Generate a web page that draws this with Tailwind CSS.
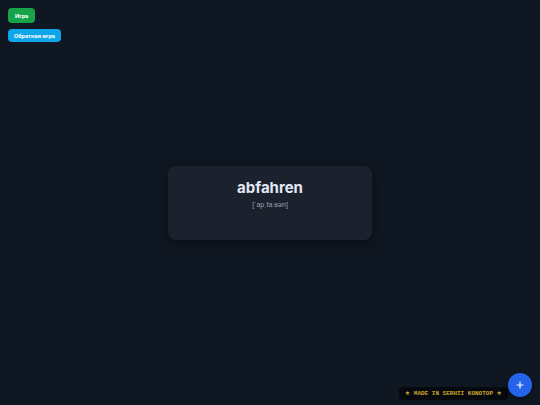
<!DOCTYPE html>
<html lang="ru">
<head>
  <meta charset="UTF-8">
  <meta name="viewport" content="width=device-width, initial-scale=1.0">
  <title>abfahren</title>
  <script src="https://cdn.jsdelivr.net/npm/@tailwindcss/browser@4"></script>
</head>
<body class="min-h-screen bg-[#0f1722] font-['Inter','Noto_Sans',sans-serif] text-[#e2e8f8]">
  <main class="min-h-screen flex items-center justify-center p-4">
    <article class="w-2/5 min-h-[74px] rounded-lg bg-[#1b212d] pt-3 pb-8 text-center shadow-[0_4px_14px_rgba(0,0,0,0.4)]">
      <h1 class="text-[15px] leading-5 font-bold">abfahren</h1>
      <p class="mt-1 text-[7px] leading-[6px] text-gray-400 font-['Liberation_Sans',sans-serif]">[ˈapˌfaːʁən]</p>
    </article>
  </main>

  <nav class="fixed top-2 left-2 flex flex-col items-start gap-[6px] text-[6px] leading-[7px] font-bold text-white font-['Roboto','Liberation_Sans',sans-serif]">
    <button type="button" class="rounded-[4px] bg-[#16a34a] px-[7px] py-1">Игра</button>
    <button type="button" class="rounded-[4px] bg-[#0ea5e9] px-[6px] py-[3px]">Обратная игра</button>
  </nav>

  <footer class="fixed right-8 bottom-[5px] rounded-[4px] bg-[#06090e] px-[6px] py-[3px] text-[6px] leading-[7px] font-bold whitespace-nowrap text-[#c9a52c] font-['Liberation_Mono','DejaVu_Sans',monospace]">★ MADE IN SERHII KONOTOP ★</footer>

  <button type="button" aria-label="Добавить" class="fixed right-2 bottom-2 size-6 flex items-center justify-center rounded-full bg-[#2563eb] text-white shadow-[0_2px_6px_rgba(0,0,0,0.4)]">
    <svg class="size-2" viewBox="0 0 8 8" fill="none" stroke="currentColor" stroke-width="1.2" stroke-linecap="round">
      <path d="M4 1v6M1 4h6"/>
    </svg>
  </button>
</body>
</html>
